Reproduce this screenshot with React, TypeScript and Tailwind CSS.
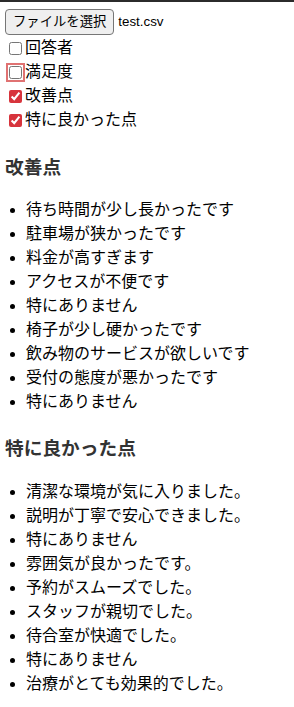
import { useState } from 'react'

const improvements = [
  '待ち時間が少し長かったです',
  '駐車場が狭かったです',
  '料金が高すぎます',
  'アクセスが不便です',
  '特にありません',
  '椅子が少し硬かったです',
  '飲み物のサービスが欲しいです',
  '受付の態度が悪かったです',
  '特にありません',
]

const goodPoints = [
  '清潔な環境が気に入りました。',
  '説明が丁寧で安心できました。',
  '特にありません',
  '雰囲気が良かったです。',
  '予約がスムーズでした。',
  'スタッフが親切でした。',
  '待合室が快適でした。',
  '特にありません',
  '治療がとても効果的でした。',
]

const font = { fontFamily: '"Liberation Sans", "Noto Sans CJK JP", sans-serif' }

export default function App() {
  const [columns, setColumns] = useState({
    respondent: false,
    satisfaction: false,
    improvement: true,
    good: true,
  })

  const toggle = (key: keyof typeof columns) =>
    setColumns(prev => ({ ...prev, [key]: !prev[key] }))

  return (
    <div style={font} className="min-h-screen border-t-2 border-[#2b2b2b] bg-white px-[5px] pt-[7px] text-[16px] leading-6 text-black">
      {/* file picker */}
      <div className="flex items-center gap-[4px] text-[13.33px]">
        <button className="h-[26px] rounded-[4px] border border-[#767676] bg-[#efefef] px-[7px] leading-none text-black">
          ファイルを選択
        </button>
        <span>test.csv</span>
      </div>

      {/* column toggles */}
      <div className="mt-[1px]">
        <label className="flex items-center">
          <input
            type="checkbox"
            checked={columns.respondent}
            onChange={() => toggle('respondent')}
            className="m-0 ml-[4px] mr-[3px] h-[13px] w-[13px] accent-[#d7343c]"
          />
          回答者
        </label>
        <label className="flex items-center">
          <input
            type="checkbox"
            checked={columns.satisfaction}
            onChange={() => toggle('satisfaction')}
            className="m-0 ml-[4px] mr-[3px] h-[13px] w-[13px] rounded-[3px] outline-2 outline-offset-1 outline-[#e07272] accent-[#d7343c]"
          />
          満足度
        </label>
        <label className="flex items-center">
          <input
            type="checkbox"
            checked={columns.improvement}
            onChange={() => toggle('improvement')}
            className="m-0 ml-[4px] mr-[3px] h-[13px] w-[13px] accent-[#d7343c]"
          />
          改善点
        </label>
        <label className="flex items-center">
          <input
            type="checkbox"
            checked={columns.good}
            onChange={() => toggle('good')}
            className="m-0 ml-[4px] mr-[3px] h-[13px] w-[13px] accent-[#d7343c]"
          />
          特に良かった点
        </label>
      </div>

      {columns.improvement && (
        <div>
          <h3 className="mt-[22px] text-[18.72px] leading-7 font-bold text-[#333]">改善点</h3>
          <ul className="mt-[16px] list-disc pl-[21px]">
            {improvements.map((t, i) => (
              <li key={i}>{t}</li>
            ))}
          </ul>
        </div>
      )}

      {columns.good && (
        <div>
          <h3 className="mt-[21px] text-[18.72px] leading-7 font-bold text-[#333]">特に良かった点</h3>
          <ul className="mt-[17px] list-disc pl-[21px]">
            {goodPoints.map((t, i) => (
              <li key={i}>{t}</li>
            ))}
          </ul>
        </div>
      )}
    </div>
  )
}
